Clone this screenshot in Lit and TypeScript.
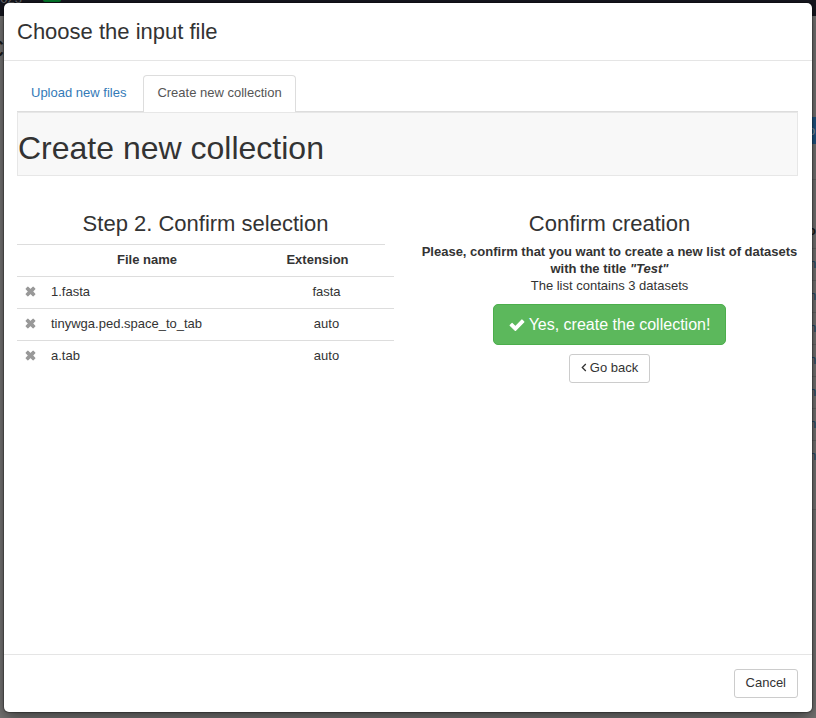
import { LitElement, html, css, svg } from "lit";
import { customElement, state } from "lit/decorators.js";

interface Dataset {
  name: string;
  ext: string;
}

const removeIcon = svg`<path d="M1 2.6 2.6 1 5 3.3 7.4 1 9 2.6 6.7 5 9 7.4 7.4 9 5 6.7 2.6 9 1 7.4 3.3 5Z" stroke-linejoin="round"/>`;
const checkIcon = svg`<path d="M1 6.9 2.9 5 6 8 12.1 1.7 14 3.6 6 11.7Z" stroke-linejoin="round"/>`;

@customElement("app-root")
export class AppRoot extends LitElement {
  @state() private datasets: Dataset[] = [
    { name: "1.fasta", ext: "fasta" },
    { name: "tinywga.ped.space_to_tab", ext: "auto" },
    { name: "a.tab", ext: "auto" },
  ];

  static styles = css`
    :host {
      display: flow-root;
      position: relative;
      min-height: 100vh;
      box-sizing: border-box;
      font: 13px/17px "Liberation Sans", Arial, sans-serif;
      color: #333;
    }
    * { box-sizing: border-box; }
    h1, h2, h3, p { margin: 0; font-weight: 400; }
    button { font: inherit; cursor: pointer; }
    svg { fill: currentColor; stroke: currentColor; flex: none; }

    .page {
      position: absolute;
      inset: 0;
      overflow: hidden;
      background: #777675;
    }
    .bar {
      display: flex;
      align-items: flex-start;
      height: 16px;
      background: #16171f;
    }
    .brand {
      display: flex;
      align-items: flex-end;
      justify-content: flex-end;
      width: 22px;
      height: 4px;
      overflow: hidden;
      color: #66676c;
      line-height: 10px;
    }
    .chip {
      width: 18px;
      height: 2px;
      margin-left: 21px;
      border-radius: 0 0 3px 3px;
      background: #047a2c;
    }
    .body { display: flex; justify-content: space-between; }
    .heading {
      display: flex;
      justify-content: flex-end;
      width: 4px;
      height: 60px;
      padding-top: 16px;
      overflow: hidden;
      color: #1a1a1a;
      font-size: 24px;
      line-height: 34px;
    }
    .side {
      width: 9px;
      padding-top: 101px;
      overflow: hidden;
    }
    .tile {
      height: 27px;
      padding: 5px 0 0 1px;
      background: #1f5584;
      color: #8a9aa8;
    }
    .lines {
      margin-top: 35px;
      border-top: 1px solid #666;
      border-bottom: 1px solid #666;
      height: 331px;
      padding-top: 42px;
    }
    .column {
      height: 26px;
      padding-left: 1px;
      color: #1a1a1a;
      font-weight: 700;
    }
    .line {
      height: 32px;
      border-top: 1px solid #666;
      padding: 6px 0 0 2px;
      color: #194468;
    }

    .modal {
      position: relative;
      display: flex;
      flex-direction: column;
      min-height: calc(100vh - 9px);
      margin: 3px 4px 6px;
      background: #fff;
      border-radius: 5px;
      box-shadow: 0 5px 15px rgba(0, 0, 0, 0.5), 0 0 1px 1px rgba(0, 0, 0, 0.3);
    }
    header {
      padding: 13px;
      border-bottom: 1px solid #e5e5e5;
    }
    header h2 { font-size: 22px; line-height: 31px; }
    main { flex: 1; padding: 14px 14px 14px 13px; }
    .tabs {
      display: flex;
      gap: 3px;
      border-bottom: 1px solid #ddd;
    }
    .tab {
      padding: 8px 13px 10px;
      border: 1px solid transparent;
      border-bottom: 0;
      border-radius: 4px 4px 0 0;
      color: #337ab7;
      text-decoration: none;
      margin-bottom: -1px;
      height: 37px;
    }
    .tab.active {
      border-color: #ddd;
      background: #fff;
      color: #555;
    }
    .banner {
      border: 1px solid #e7e7e7;
      background: #f8f8f8;
      padding: 17px 0 9px;
      margin-bottom: 32px;
    }
    .banner h1 { font-size: 32px; line-height: 36px; }
    .columns {
      display: grid;
      grid-template-columns: 1fr 1fr;
      gap: 27px;
      text-align: center;
    }
    h3 { font-size: 22px; line-height: 31px; }

    table, thead, tbody { display: block; }
    table { margin-top: 5px; }
    thead { margin-right: 9px; }
    tbody tr, thead { border-top: 1px solid #ddd; }
    tr {
      display: grid;
      grid-template-columns: 27px 1fr 135px;
      height: 32px;
    }
    thead tr { height: 31px; }
    th, td { padding: 6px 8px; }
    .name { padding-left: 7px; text-align: left; }
    td.icon { padding: 9px 0 0 8px; text-align: left; }
    .remove {
      display: block;
      padding: 0;
      border: 0;
      background: none;
      color: #999;
    }
    .remove svg { display: block; }

    .confirm { display: flex; flex-direction: column; align-items: center; }
    .confirm p { margin-top: 4px; }
    .btn {
      display: flex;
      align-items: center;
      border: 1px solid #ccc;
      border-radius: 3px;
      background: #fff;
      color: #333;
      padding: 4px 11px 6px;
    }
    .primary {
      margin: 10px 0 9px;
      padding: 9px 15px;
      gap: 4px;
      border-color: #4cae4c;
      border-radius: 5px;
      background: #5cb85c;
      color: #fff;
      font-size: 16px;
      line-height: 21px;
    }
    .back { gap: 3px; }
    .back svg { fill: none; }
    footer {
      display: flex;
      justify-content: flex-end;
      padding: 14px;
      border-top: 1px solid #e5e5e5;
    }
  `;

  private remove(item: Dataset) {
    this.datasets = this.datasets.filter((d) => d !== item);
  }

  render() {
    return html`
      <div class="page" aria-hidden="true">
        <div class="bar">
          <div class="brand">023</div>
          <div class="chip"></div>
        </div>
        <div class="body">
          <div class="heading">C</div>
          <div class="side">
            <div class="tile">ol</div>
            <div class="lines">
              <div class="column">o</div>
              ${Array.from({ length: 7 }, () => html`<div class="line">n</div>`)}
            </div>
          </div>
        </div>
      </div>
      <div class="modal" role="dialog" aria-labelledby="title">
        <header><h2 id="title">Choose the input file</h2></header>
        <main>
          <nav class="tabs">
            <a class="tab" href="#upload">Upload new files</a>
            <a class="tab active" href="#collection" aria-current="page">Create new collection</a>
          </nav>
          <div class="banner"><h1>Create new collection</h1></div>
          <div class="columns">
            <section>
              <h3>Step 2. Confirm selection</h3>
              <table>
                <thead>
                  <tr><th></th><th>File name</th><th>Extension</th></tr>
                </thead>
                <tbody>
                  ${this.datasets.map(
                    (d) => html`<tr>
                      <td class="icon">
                        <button class="remove" aria-label="Remove ${d.name}" @click=${() => this.remove(d)}>
                          <svg width="11" height="11" viewBox="0 0 10 10" stroke-width="1">${removeIcon}</svg>
                        </button>
                      </td>
                      <td class="name">${d.name}</td>
                      <td>${d.ext}</td>
                    </tr>`
                  )}
                </tbody>
              </table>
            </section>
            <section class="confirm">
              <h3>Confirm creation</h3>
              <p>
                <strong>Please, confirm that you want to create a new list of datasets with the title <em>"Test"</em></strong><br />
                The list contains ${this.datasets.length} datasets
              </p>
              <button class="btn primary">
                <svg width="16" height="14" viewBox="0 0 15 13" stroke-width="1">${checkIcon}</svg>
                Yes, create the collection!
              </button>
              <button class="btn back">
                <svg width="6" height="9" viewBox="0 0 6 9" stroke-width="1.3"><path d="M4.8 1 1.3 4.5 4.8 8" /></svg>
                Go back
              </button>
            </section>
          </div>
        </main>
        <footer><button class="btn">Cancel</button></footer>
      </div>
    `;
  }
}
